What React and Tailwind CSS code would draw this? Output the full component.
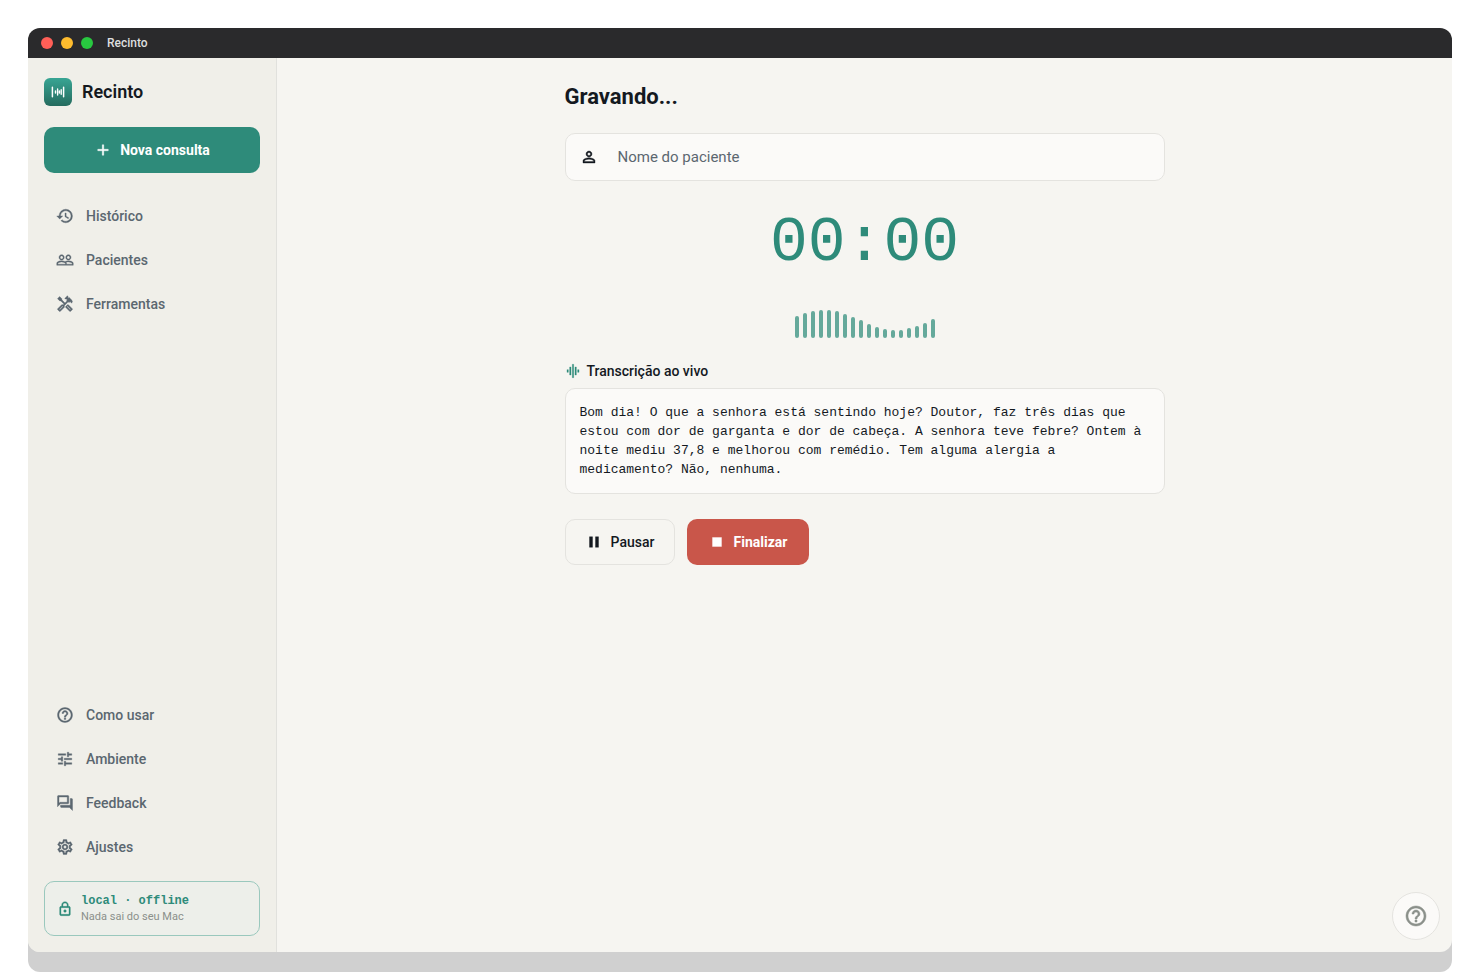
import { useState } from 'react'
import {
  MdAdd, MdGraphicEq, MdHelpOutline, MdHistory, MdLockOutline, MdOutlineForum, MdOutlineHandyman,
  MdOutlineSettings, MdPause, MdPeopleOutline, MdPersonOutline, MdStop, MdTune,
} from 'react-icons/md'

const MAIN_NAV = [
  { label: 'Histórico', icon: MdHistory },
  { label: 'Pacientes', icon: MdPeopleOutline },
  { label: 'Ferramentas', icon: MdOutlineHandyman },
]

const FOOTER_NAV = [
  { label: 'Como usar', icon: MdHelpOutline },
  { label: 'Ambiente', icon: MdTune },
  { label: 'Feedback', icon: MdOutlineForum },
  { label: 'Ajustes', icon: MdOutlineSettings },
]

const LEVELS = [22, 25, 27, 28, 28, 27, 24, 21, 18, 14, 11, 9, 8, 8, 10, 12, 15, 19]

const TRANSCRIPT = 'Bom dia! O que a senhora está sentindo hoje? Doutor, faz três dias que estou com dor de garganta e dor de cabeça. A senhora teve febre? Ontem à noite mediu 37,8 e melhorou com remédio. Tem alguma alergia a medicamento? Não, nenhuma.'

// thickens the glyph but leaves out the icon's invisible bounding path
const BOLD_ICON = '[&_path:not([fill=none])]:stroke-[0.5]'

function Logo() {
  return (
    <svg viewBox="0 0 28 28" className="size-7" aria-hidden="true">
      <defs>
        <linearGradient id="logo" x1="0" y1="0" x2="0" y2="1">
          <stop offset="0" stopColor="#38a594" />
          <stop offset="1" stopColor="#256b5e" />
        </linearGradient>
      </defs>
      <rect width="28" height="28" rx="6" fill="url(#logo)" />
      <g stroke="#fff" strokeLinecap="round" strokeWidth="1.5">
        <path d="M8.4 9.3V18.7M19.6 9.3V18.7" />
        <path d="M11.5 13V15M13.6 11V17M15.4 13V15M17.2 11.8V16.2" strokeWidth="1.4" />
      </g>
    </svg>
  )
}

function NavList({ items, label }) {
  return (
    <nav aria-label={label}>
      {items.map(({ label, icon: Icon }) => (
        <a key={label} href="#" className="flex h-11 items-center gap-3 rounded-lg px-3 text-sm font-medium text-[#5b6770]">
          <Icon className={`size-[18px] ${BOLD_ICON}`} />
          {label}
        </a>
      ))}
    </nav>
  )
}

function Sidebar() {
  return (
    <aside className="flex w-[249px] shrink-0 flex-col border-r border-[#e1e1dd] bg-[#f0efe9] px-4 pt-5 pb-4">
      <div className="flex items-center gap-2.5">
        <Logo />
        <span className="text-lg leading-7 font-semibold">Recinto</span>
      </div>
      <button type="button" className="mt-[21px] mb-[21px] flex h-[46px] items-center justify-center gap-2 rounded-[10px] bg-[#2e8b7a] text-sm font-bold text-white">
        <MdAdd className={`size-[18px] ${BOLD_ICON}`} />
        Nova consulta
      </button>
      <NavList items={MAIN_NAV} label="Principal" />
      <div className="grow" />
      <NavList items={FOOTER_NAV} label="Suporte" />
      <div className="mt-3 flex h-[55px] items-center gap-2 rounded-[10px] border border-[#9ac8bd] bg-[#edefea] px-3 text-[#2e8b7a]">
        <MdLockOutline className={`size-4 ${BOLD_ICON}`} />
        <div>
          <p className="font-['Liberation_Mono',monospace] text-xs leading-4 font-bold">local · offline</p>
          <p className="text-[11px] leading-4 text-[#8b908a]">Nada sai do seu Mac</p>
        </div>
      </div>
    </aside>
  )
}

export default function App() {
  const [patient, setPatient] = useState('')

  return (
    <div className="flex h-screen bg-white p-7 font-[Roboto,sans-serif] text-[#14191f]">
      <div className="relative flex grow flex-col overflow-hidden rounded-xl bg-[#f6f5f1] shadow-[0_20px_0_#d0d0d0]">
        <header className="flex h-[30px] shrink-0 items-center gap-2 bg-[#2a2a2c] px-[13px]">
          <span className="size-3 rounded-full bg-[#ff5f57]" />
          <span className="size-3 rounded-full bg-[#febc2e]" />
          <span className="size-3 rounded-full bg-[#28c840]" />
          <span className="ml-1.5 text-xs font-medium text-[#dededf]">Recinto</span>
        </header>

        <div className="flex min-h-0 grow">
          <Sidebar />

          <main className="grow px-6 pt-6">
            <div className="mx-auto max-w-[600px]">
              <h1 className="text-[22px] leading-[30px] font-bold">Gravando...</h1>

              <label className="mt-[21px] flex h-12 items-center gap-5 rounded-[10px] border border-[#e4e3df] bg-[#fbfaf8] px-3.5">
                <MdPersonOutline className={`size-[18px] ${BOLD_ICON}`} />
                <input
                  value={patient}
                  onChange={e => setPatient(e.target.value)}
                  placeholder="Nome do paciente"
                  aria-label="Nome do paciente"
                  className="min-w-0 grow text-[15px] outline-none placeholder:text-[#5b6770]"
                />
              </label>

              <div role="timer" className="mt-7 text-center font-['Liberation_Mono',monospace] text-[63px] leading-[70px] text-[#2e8b7a]">
                00:00
              </div>

              <div className="mt-[23px] flex h-9 items-end justify-center gap-1">
                {LEVELS.map((h, i) => (
                  <span key={i} className="w-1 rounded-full bg-[#65a99b]" style={{ height: h }} />
                ))}
              </div>

              <h2 className="mt-6 flex items-center gap-1.5 text-sm leading-[18px] font-medium">
                <MdGraphicEq className={`size-4 text-[#2e8b7a] ${BOLD_ICON}`} />
                Transcrição ao vivo
              </h2>
              <p className="mt-2 rounded-[10px] border border-[#e4e3df] bg-[#fbfaf8] p-3.5 font-['Liberation_Mono',monospace] text-[13px] leading-[19px]">
                {TRANSCRIPT}
              </p>

              <div className="mt-[25px] flex gap-3">
                <button type="button" className="flex h-[46px] min-w-[110px] items-center justify-center gap-2 rounded-[10px] border border-[#e4e3df] px-4 text-sm font-medium">
                  <MdPause className={`size-[18px] ${BOLD_ICON}`} />
                  Pausar
                </button>
                <button type="button" className="flex h-[46px] min-w-[122px] items-center justify-center gap-2 rounded-[10px] bg-[#c9564a] px-4 text-sm font-bold text-white">
                  <MdStop className={`size-[18px] ${BOLD_ICON}`} />
                  Finalizar
                </button>
              </div>
            </div>
          </main>
        </div>

        <button type="button" aria-label="Ajuda" className="absolute right-3 bottom-3 flex size-12 items-center justify-center rounded-full border border-[#e4e3df] bg-[#fbfaf8] text-[#8b908a]">
          <MdHelpOutline className={`size-6 ${BOLD_ICON}`} />
        </button>
      </div>
    </div>
  )
}
